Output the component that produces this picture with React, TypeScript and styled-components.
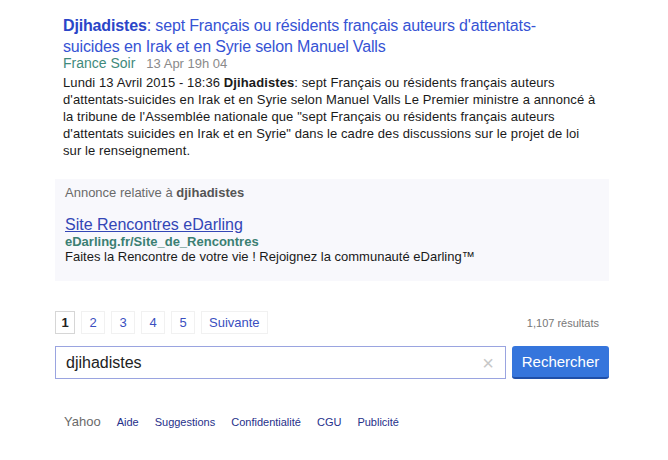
import React from 'react'
import styled, { createGlobalStyle } from 'styled-components'

const GlobalStyle = createGlobalStyle`
  body {
    margin: 0;
    background: #ffffff;
    font-family: "Liberation Sans", Arial, sans-serif;
  }
`

const Page = styled.div`
  width: 554px;
  padding: 15px 0 0 55px;
`

const Result = styled.div`
  padding: 0 8px;
`

const Title = styled.a`
  display: block;
  max-width: 500px;
  font-size: 16px;
  letter-spacing: -0.15px;
  line-height: 21px;
  color: #3653d4;
  text-decoration: none;
  b {
    font-weight: bold;
    color: #2a45c8;
  }
`

const Meta = styled.div`
  margin-top: -2px;
  display: flex;
  align-items: baseline;
  gap: 11px;
  line-height: 16px;
`

const Source = styled.span`
  font-size: 14px;
  color: #3f8a7c;
`

const Time = styled.span`
  font-size: 13px;
  color: #8a8a8a;
`

const Snippet = styled.p`
  margin: 2px 0 0;
  max-width: 538px;
  font-size: 13px;
  letter-spacing: 0.1px;
  line-height: 17px;
  color: #1a1a1a;
`

const Ad = styled.div`
  margin-top: 20px;
  background: #f8f8fc;
  padding: 6px 10px 16px;
`

const AdLabel = styled.div`
  font-size: 13px;
  line-height: 16px;
  color: #6a6a6a;
  b {
    color: #555;
  }
`

const AdTitle = styled.a`
  display: block;
  margin-top: 14px;
  font-size: 16px;
  line-height: 19px;
  color: #3346b6;
  text-decoration: underline;
`

const AdUrl = styled.div`
  font-size: 13px;
  line-height: 16px;
  font-weight: bold;
  color: #3b7f73;
`

const AdText = styled.div`
  margin-top: -2px;
  font-size: 13px;
  line-height: 17px;
  color: #1a1a1a;
`

const PagerRow = styled.div`
  margin-top: 30px;
  display: flex;
  align-items: center;
  justify-content: space-between;
  padding-right: 10px;
`

const Pager = styled.div`
  display: flex;
  gap: 6px;
`

const PageLink = styled.a<{ $current?: boolean; $wide?: boolean }>`
  display: flex;
  align-items: center;
  justify-content: center;
  min-width: ${p => (p.$current ? 20 : 24)}px;
  height: 23px;
  padding: 0 ${p => (p.$wide ? 7 : 0)}px;
  box-sizing: border-box;
  border: 1px solid ${p => (p.$current ? '#d6d6d6' : '#f1f1f1')};
  font-size: 13px;
  font-weight: ${p => (p.$current ? 'bold' : 'normal')};
  color: ${p => (p.$current ? '#222' : '#3a4fc0')};
  text-decoration: none;
`

const Count = styled.span`
  font-size: 11px;
  color: #777;
`

const SearchRow = styled.form`
  margin-top: 12px;
  display: flex;
  gap: 6px;
`

const InputBox = styled.div`
  flex: 1;
  height: 33px;
  box-sizing: border-box;
  border: 1px solid #9aa4e0;
  display: flex;
  align-items: center;
  padding: 0 10px;
`

const Input = styled.input`
  flex: 1;
  border: none;
  outline: none;
  background: transparent;
  font-family: "Liberation Sans", Arial, sans-serif;
  font-size: 16px;
  color: #222;
  padding: 0;
`

const Clear = styled.span`
  font-size: 20px;
  color: #c8c8c8;
  line-height: 1;
  margin-right: 1px;
`

const Button = styled.button`
  width: 97px;
  height: 33px;
  border: none;
  border-radius: 3px;
  border-bottom: 2px solid #1f4fa8;
  background: #3575dc;
  color: #fff;
  font-family: "Liberation Sans", Arial, sans-serif;
  font-size: 15px;
  padding: 0;
`

const Footer = styled.div`
  margin-top: 35px;
  padding-left: 9px;
  display: flex;
  align-items: baseline;
  gap: 16px;
`

const Brand = styled.span`
  font-size: 13px;
  color: #6a6a6a;
`

const FooterLink = styled.a`
  font-size: 11px;
  color: #26308a;
  text-decoration: none;
`

const pages = ['2', '3', '4', '5']
const links = ['Aide', 'Suggestions', 'Confidentialité', 'CGU', 'Publicité']

const App: React.FC = () => {
  const [query, setQuery] = React.useState<string>('djihadistes')

  return (
    <>
      <GlobalStyle />
      <Page>
        <Result>
          <Title href='#'>
            <b>Djihadistes</b>: sept Français ou résidents français auteurs d'attentats-suicides en Irak et en Syrie selon Manuel Valls
          </Title>
          <Meta>
            <Source>France Soir</Source>
            <Time>13 Apr 19h 04</Time>
          </Meta>
          <Snippet>
            Lundi 13 Avril 2015 - 18:36 <b>Djihadistes</b>: sept Français ou résidents français auteurs
            d'attentats-suicides en Irak et en Syrie selon Manuel Valls Le Premier ministre a annoncé
            à la tribune de l'Assemblée nationale que "sept Français ou résidents français auteurs
            d'attentats suicides en Irak et en Syrie" dans le cadre des discussions sur le projet de loi
            sur le renseignement.
          </Snippet>
        </Result>

        <Ad>
          <AdLabel>Annonce relative à <b>djihadistes</b></AdLabel>
          <AdTitle href='#'>Site Rencontres eDarling</AdTitle>
          <AdUrl>eDarling.fr/Site_de_Rencontres</AdUrl>
          <AdText>Faites la Rencontre de votre vie ! Rejoignez la communauté eDarling™</AdText>
        </Ad>

        <PagerRow>
          <Pager>
            <PageLink $current>1</PageLink>
            {pages.map(p => (
              <PageLink key={p} href='#'>{p}</PageLink>
            ))}
            <PageLink href='#' $wide>Suivante</PageLink>
          </Pager>
          <Count>1,107 résultats</Count>
        </PagerRow>

        <SearchRow onSubmit={e => e.preventDefault()}>
          <InputBox>
            <Input value={query} onChange={e => setQuery(e.target.value)} />
            <Clear>×</Clear>
          </InputBox>
          <Button type='submit'>Rechercher</Button>
        </SearchRow>

        <Footer>
          <Brand>Yahoo</Brand>
          {links.map(l => (
            <FooterLink key={l} href='#'>{l}</FooterLink>
          ))}
        </Footer>
      </Page>
    </>
  )
}

export default App
